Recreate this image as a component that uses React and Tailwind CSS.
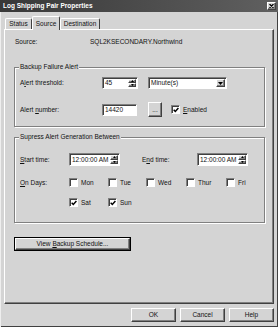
const RAISED =
  "bg-[#d4d4d4] border border-t-white border-l-white border-r-[#404040] border-b-[#404040] shadow-[inset_-1px_-1px_0_#808080]";
const SUNKEN =
  "bg-white border border-t-[#808080] border-l-[#808080] border-r-white border-b-white shadow-[inset_1px_1px_0_#404040]";

function Tri({ up, small }) {
  const w = small ? 3 : 5;
  const h = small ? 2 : 3;
  return (
    <svg width={w} height={h} viewBox={`0 0 ${w} ${h}`}>
      <path
        d={up ? `M${w / 2} 0 L${w} ${h} L0 ${h} Z` : `M0 0 L${w} 0 L${w / 2} ${h} Z`}
        fill="#000"
      />
    </svg>
  );
}

function Spinner({ value, className = "" }) {
  return (
    <div className={`${SUNKEN} flex items-stretch ${className}`}>
      <span className="flex-1 flex items-center pl-[2px]">{value}</span>
      <div className="flex flex-col w-[8px] my-[1px] mr-[1px]">
        <div className={`${RAISED} flex-1 flex items-center justify-center`}>
          <Tri up small />
        </div>
        <div className={`${RAISED} flex-1 flex items-center justify-center`}>
          <Tri small />
        </div>
      </div>
    </div>
  );
}

function Check({ checked, children, className = "" }) {
  return (
    <div className={`flex items-center ${className}`}>
      <div className={`${SUNKEN} w-[9px] h-[9px] flex items-center justify-center`}>
        {checked && (
          <svg width="6" height="6" viewBox="0 0 7 7">
            <path d="M0.8 3.2 L2.7 5.2 L6.3 1.2" stroke="#000" strokeWidth="1.7" fill="none" />
          </svg>
        )}
      </div>
      <span className="ml-[3px]">{children}</span>
    </div>
  );
}

function GroupBox({ title, className = "", children }) {
  return (
    <div
      className={`relative border border-[#808080] shadow-[inset_1px_1px_0_#fff,1px_1px_0_#fff] ${className}`}
    >
      <span className="absolute -top-[5px] left-[4px] px-[1px] bg-[#d4d4d4] leading-[8px]">
        {title}
      </span>
      {children}
    </div>
  );
}

function Tab({ active, className = "", children }) {
  return active ? (
    <div
      className={`relative z-10 -mb-[1px] h-[14px] flex items-center justify-center bg-[#d4d4d4] border-t border-l border-r border-t-white border-l-white border-r-[#404040] rounded-t-[2px] ${className}`}
    >
      {children}
    </div>
  ) : (
    <div
      className={`h-[11px] flex items-center justify-center border-t border-l border-r border-t-white border-l-white border-r-[#404040] rounded-t-[2px] ${className}`}
    >
      {children}
    </div>
  );
}

function U({ children }) {
  return <span className="underline underline-offset-[1px]">{children}</span>;
}

export default function App() {
  return (
    <div className="w-[278px] h-[327px] overflow-hidden bg-[#d4d4d4] font-['Liberation_Sans',Arial,sans-serif] text-[6.5px] leading-[8px] text-[#111] shadow-[inset_1px_0_0_#eeeeee,inset_-1px_-1px_0_#404040]">
      {/* title bar */}
      <div className="h-[12px] flex items-center pl-[3px] pr-[2px] bg-linear-to-r from-[#383838] to-[#606060]">
        <span className="flex-1 font-bold text-white">Log Shipping Pair Properties</span>
        <div className={`${RAISED} w-[9px] h-[8px] flex items-center justify-center`}>
          <svg width="5" height="4" viewBox="0 0 5 4">
            <path d="M0.5 0 L4.5 4 M4.5 0 L0.5 4" stroke="#000" strokeWidth="1.2" />
          </svg>
        </div>
      </div>

      {/* tabs */}
      <div className="mt-[4px] h-[13px] flex items-end pl-[5px]">
        <Tab className="w-[27px]">Status</Tab>
        <Tab active className="w-[28px]">Source</Tab>
        <Tab className="w-[40px]">Destination</Tab>
      </div>

      {/* tab panel */}
      <div className={`${RAISED} mx-[4px] h-[275px] pl-[9px]`}>
        <div className="mt-[8px] h-[8px] flex items-center pl-[1px]">
          <span className="w-[75px]">Source:</span>
          <span>SQL2KSECONDARY.Northwind</span>
        </div>

        <GroupBox title="Backup Failure Alert" className="mt-[21px] w-[251px] h-[60px]">
          <div className="mt-[9px] h-[12px] flex items-center pl-[5px]">
            <span className="w-[82px]">
              A<U>l</U>ert threshold:
            </span>
            <Spinner value="45" className="w-[36px] h-full" />
            <div className={`${SUNKEN} ml-[10px] w-[79px] h-full flex items-stretch`}>
              <span className="flex-1 flex items-center pl-[2px]">Minute(s)</span>
              <div className={`${RAISED} w-[9px] my-[1px] mr-[1px] flex items-center justify-center`}>
                <Tri />
              </div>
            </div>
          </div>
          <div className="mt-[13px] h-[15px] flex items-center pl-[5px]">
            <span className="w-[82px]">
              Alert <U>n</U>umber:
            </span>
            <div className={`${SUNKEN} w-[35px] h-[12px] flex items-center pl-[2px]`}>14420</div>
            <div className={`${RAISED} ml-[11px] w-[14px] h-[15px] flex items-center justify-center`}>
              ...
            </div>
            <Check checked className="ml-[9px]">
              <U>E</U>nabled
            </Check>
          </div>
        </GroupBox>

        <GroupBox title="Supress Alert Generation Between" className="mt-[10px] w-[251px] h-[86px]">
          <div className="mt-[15px] h-[13px] flex items-center pl-[5px]">
            <span className="w-[49px]">
              <U>S</U>tart time:
            </span>
            <Spinner value="12:00:00 AM" className="w-[51px] h-full" />
            <span className="ml-[22px] w-[55px]">
              E<U>n</U>d time:
            </span>
            <Spinner value="12:00:00 AM" className="w-[51px] h-full" />
          </div>
          <div className="mt-[12px] h-[9px] flex items-center pl-[5px]">
            <span className="w-[49px]">
              <U>O</U>n Days:
            </span>
            <Check className="w-[39px]">Mon</Check>
            <Check className="w-[38px]">Tue</Check>
            <Check className="w-[40px]">Wed</Check>
            <Check className="w-[40px]">Thur</Check>
            <Check>Fri</Check>
          </div>
          <div className="mt-[11px] h-[9px] flex items-center pl-[5px]">
            <span className="w-[49px]" />
            <Check checked className="w-[39px]">
              Sat
            </Check>
            <Check checked>Sun</Check>
          </div>
        </GroupBox>

        <div className="mt-[14px] w-[117px] h-[14px] border border-black">
          <div className={`${RAISED} w-full h-full flex items-center justify-center`}>
            <span>
              View <U>B</U>ackup Schedule...
            </span>
          </div>
        </div>
      </div>

      {/* dialog buttons */}
      <div className="mt-[4px] flex justify-end gap-[4px] pr-[4px]">
        <div className={`${RAISED} w-[45px] h-[14px] flex items-center justify-center`}>OK</div>
        <div className={`${RAISED} w-[45px] h-[14px] flex items-center justify-center`}>Cancel</div>
        <div className={`${RAISED} w-[45px] h-[14px] flex items-center justify-center`}>Help</div>
      </div>
    </div>
  );
}
